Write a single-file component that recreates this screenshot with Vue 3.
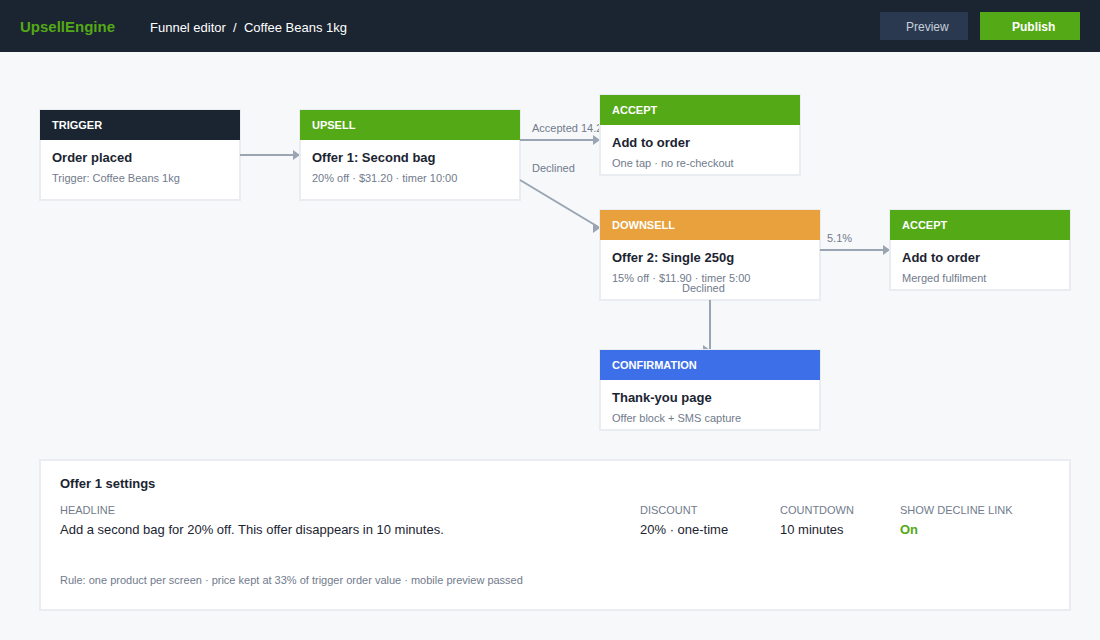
<script setup>
const nodes = [
  { id: 'trigger', tone: 'dark', kind: 'TRIGGER', title: 'Order placed', note: 'Trigger: Coffee Beans 1kg', x: 40, y: 110, w: 200, h: 90 },
  { id: 'upsell', tone: 'green', kind: 'UPSELL', title: 'Offer 1: Second bag', note: '20% off · $31.20 · timer 10:00', x: 300, y: 110, w: 220, h: 90 },
  { id: 'accept1', tone: 'green', kind: 'ACCEPT', title: 'Add to order', note: 'One tap · no re-checkout', x: 600, y: 95, w: 200, h: 80 },
  { id: 'downsell', tone: 'orange', kind: 'DOWNSELL', title: 'Offer 2: Single 250g', note: '15% off · $11.90 · timer 5:00', x: 600, y: 210, w: 220, h: 90 },
  { id: 'accept2', tone: 'green', kind: 'ACCEPT', title: 'Add to order', note: 'Merged fulfilment', x: 890, y: 210, w: 180, h: 80 },
  { id: 'confirm', tone: 'blue', kind: 'CONFIRMATION', title: 'Thank-you page', note: 'Offer block + SMS capture', x: 600, y: 350, w: 220, h: 80 },
]

// Edges run from the source node to the left tip of the target.
const edges = [
  { x1: 240, y1: 155, x2: 300, y2: 155 },
  { x1: 520, y1: 140, x2: 600, y2: 140, label: 'Accepted 14.2%', lx: 532, ly: 132 },
  { x1: 520, y1: 180, x2: 600, y2: 228, label: 'Declined', lx: 532, ly: 172 },
  { x1: 820, y1: 250, x2: 890, y2: 250, label: '5.1%', lx: 827, ly: 242 },
  { x1: 710, y1: 300, x2: 710, y2: 350, label: 'Declined', lx: 682, ly: 292 },
]

const fills = { dark: '#1b2431', green: '#54a916', orange: '#e8a13c', blue: '#3d6fe8' }

// Painting order: each edge sits under the node it leads to.
const layers = [
  { node: nodes[0] },
  { edge: edges[0] },
  { node: nodes[1] },
  { edge: edges[1] },
  { node: nodes[2] },
  { edge: edges[2] },
  { node: nodes[3] },
  { edge: edges[3] },
  { node: nodes[4] },
  { edge: edges[4] },
  { node: nodes[5] },
]

const fields = [
  { label: 'HEADLINE', value: 'Add a second bag for 20% off. This offer disappears in 10 minutes.' },
  { label: 'DISCOUNT', value: '20% · one-time' },
  { label: 'COUNTDOWN', value: '10 minutes' },
  { label: 'SHOW DECLINE LINK', value: 'On', on: true },
]
</script>

<template>
  <div class="editor">
    <header class="topbar">
      <div class="brand">UpsellEngine</div>
      <div class="crumbs">Funnel editor&nbsp; /&nbsp; Coffee Beans 1kg</div>
      <div class="actions">
        <button class="btn preview">Preview</button>
        <button class="btn publish">Publish</button>
      </div>
    </header>

    <svg class="canvas" viewBox="0 52 1100 407" width="1100" height="407">
      <template v-for="(layer, i) in layers" :key="i">
        <g v-if="layer.node">
          <rect class="box" :x="layer.node.x" :y="layer.node.y" :width="layer.node.w" :height="layer.node.h" />
          <rect :x="layer.node.x" :y="layer.node.y" :width="layer.node.w" height="30" :fill="fills[layer.node.tone]" />
          <text class="kind" :x="layer.node.x + 12" :y="layer.node.y + 19">{{ layer.node.kind }}</text>
          <text class="title" :x="layer.node.x + 12" :y="layer.node.y + 52">{{ layer.node.title }}</text>
          <text class="note" :x="layer.node.x + 12" :y="layer.node.y + 72">{{ layer.node.note }}</text>
        </g>
        <g v-else>
          <line class="wire" :x1="layer.edge.x1" :y1="layer.edge.y1" :x2="layer.edge.x2" :y2="layer.edge.y2" />
          <path class="tip" :d="`M${layer.edge.x2} ${layer.edge.y2}l-7 -5v10z`" />
          <text v-if="layer.edge.label" class="note" :x="layer.edge.lx" :y="layer.edge.ly">{{ layer.edge.label }}</text>
        </g>
      </template>
    </svg>

    <section class="settings">
      <h2>Offer 1 settings</h2>
      <div class="fields">
        <div v-for="f in fields" :key="f.label" class="field">
          <div class="label">{{ f.label }}</div>
          <div class="value" :class="{ on: f.on }">{{ f.value }}</div>
        </div>
      </div>
      <p class="rule">Rule: one product per screen · price kept at 33% of trigger order value · mobile preview passed</p>
    </section>
  </div>
</template>

<style>
body {
  background: #f7f8fa;
}
</style>

<style scoped>
.editor {
  width: 1100px;
  height: 640px;
  overflow: hidden;
  background: #f7f8fa;
  color: #1b2431;
  font-family: Arial, "Liberation Sans", sans-serif;
}
.topbar {
  display: flex;
  align-items: center;
  box-sizing: border-box;
  height: 52px;
  padding: 0 20px;
  background: #1b2431;
}
.brand {
  width: 130px;
  color: #54a916;
  font-size: 15px;
  font-weight: 700;
  line-height: 17px;
}
.crumbs {
  color: #fff;
  font-size: 13px;
  line-height: 15px;
  padding-top: 2px;
}
.actions {
  display: flex;
  gap: 12px;
  margin-left: auto;
}
.btn {
  box-sizing: border-box;
  height: 28px;
  border: 0;
  font-family: inherit;
  font-size: 12px;
  line-height: 14px;
  text-align: left;
}
.preview {
  width: 88px;
  padding: 1px 0 0 26px;
  background: #2a3950;
  color: #c7cfdb;
}
.publish {
  width: 100px;
  padding: 1px 0 0 32px;
  background: #54a916;
  color: #fff;
  font-weight: 700;
}
.canvas {
  display: block;
}
.box {
  fill: #fff;
  stroke: #e9ecf0;
  stroke-width: 2;
}
.kind {
  fill: #fff;
  font-size: 11px;
  font-weight: 700;
}
.title {
  fill: #1b2431;
  font-size: 13px;
  font-weight: 700;
}
.note {
  fill: #717b8c;
  font-size: 11px;
}
.wire {
  stroke: #9aa4b2;
  stroke-width: 2;
}
.tip {
  fill: #9aa4b2;
}
.settings {
  box-sizing: border-box;
  width: 1032px;
  height: 152px;
  margin-left: 39px;
  padding: 15px 19px;
  border: 2px solid #e9ecf0;
  background: #fff;
}
h2 {
  margin: 0;
  font-size: 13px;
  line-height: 15px;
}
.fields {
  display: grid;
  grid-template-columns: 580px 140px 120px 1fr;
  margin-top: 13px;
}
.label {
  color: #717b8c;
  font-size: 11px;
  line-height: 13px;
}
.value {
  margin-top: 5px;
  font-size: 13px;
  line-height: 15px;
}
.value.on {
  color: #54a916;
  font-weight: 700;
}
.rule {
  margin: 37px 0 0;
  color: #717b8c;
  font-size: 11px;
  line-height: 13px;
}
</style>
